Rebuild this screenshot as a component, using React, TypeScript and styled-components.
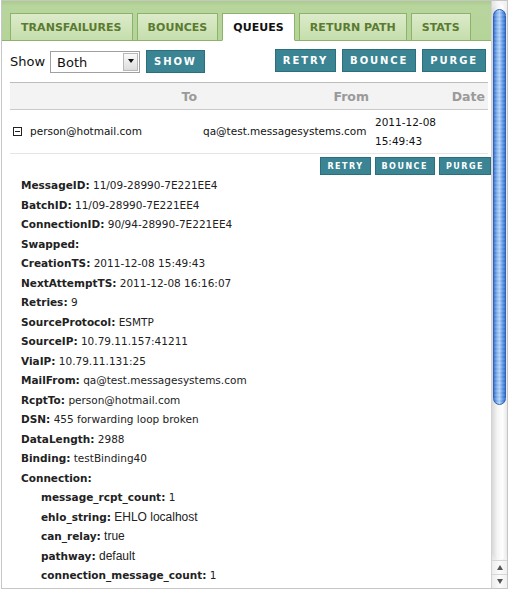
import React from 'react'
import styled, { createGlobalStyle } from 'styled-components'

const GlobalStyle = createGlobalStyle`
  html, body {
    margin: 0;
    padding: 0;
    background: #fff;
    font-family: "DejaVu Sans", Verdana, sans-serif;
    color: #222;
  }
`;

const Panel = styled.div`
  margin-left: 1px;
  width: 507px;
  height: 589px;
  box-sizing: border-box;
  border: 1px solid #c6c6c6;
  display: flex;
  background: #fff;
  overflow: hidden;
`;

const Main = styled.div`
  flex: 1;
  min-width: 0;
  overflow: hidden;
`;

// drawn aqua scrollbar
const ScrollBar = styled.div`
  width: 15px;
  display: flex;
  flex-direction: column;
  background: linear-gradient(to right, #e4e4e4, #f9f9f9 45%, #efefef);
  border-left: 1px solid #d2d2d2;
`;

const Track = styled.div`
  flex: 1;
  margin: 3px 0 0 0;
  padding-top: 5px;
  border-radius: 8px;
  background: linear-gradient(to right, #d8d8d8, #f4f4f4 35%, #fefefe 70%, #e8e8e8);
`;

const Thumb = styled.div`
  height: 396px;
  margin: 0 1px;
  box-sizing: border-box;
  border-radius: 7px;
  border: 1px solid #2f62b8;
  background:
    repeating-linear-gradient(to bottom, rgba(255,255,255,0.08) 0 2px, rgba(0,0,0,0.03) 2px 4px),
    linear-gradient(to right, #3a77d6, #8fbaf2 30%, #b1d2f9 50%, #6aa2ec 75%, #3670d0);
`;

const Arrow = styled.div<{ $down?: boolean }>`
  height: 13px;
  display: flex;
  align-items: center;
  justify-content: center;
  border-top: 1px solid #d6d6d6;
  background: linear-gradient(to right, #ececec, #fbfbfb 50%, #f0f0f0);

  &::before {
    content: '';
    border-left: 3px solid transparent;
    border-right: 3px solid transparent;
    ${p => (p.$down ? 'border-top: 5px solid #555;' : 'border-bottom: 5px solid #555;')}
  }
`;

const TabBar = styled.div`
  display: flex;
  align-items: flex-end;
  gap: 4px;
  height: 39px;
  padding-left: 8px;
  border-bottom: 1px solid #8db26a;
  background: linear-gradient(#a9cb8a, #b7d59c 12%, #b5d49a);
`;

const Tab = styled.div<{ $active?: boolean }>`
  height: 26px;
  margin-bottom: -1px;
  padding: 0 10px;
  display: flex;
  align-items: center;
  white-space: nowrap;
  font-size: 11px;
  letter-spacing: 0.05px;
  font-weight: bold;
  color: ${p => (p.$active ? '#111' : '#5a7b30')};
  background: ${p => (p.$active ? '#fff' : 'linear-gradient(#dcebca, #c5deac)')};
  border: 1px solid #8db26a;
  border-bottom-color: ${p => (p.$active ? '#fff' : '#8db26a')};
`;

const Toolbar = styled.div`
  display: flex;
  align-items: center;
  height: 41px;
  padding: 0 5px 0 8px;
`;

const ShowLabel = styled.span`
  font-size: 13px;
  color: #111;
  margin-right: 5px;
`;

const SelectBox = styled.span`
  position: relative;
  display: inline-block;
  width: 90px;
  height: 22px;
  box-sizing: border-box;
  border: 1px solid #a0a0a0;
  background: #fff;
  margin-right: 6px;

  &::after {
    content: '';
    position: absolute;
    right: 1px;
    top: 1px;
    width: 13px;
    height: 16px;
    border: 1px solid #b8b8b8;
    background: linear-gradient(#fafafa, #dcdcdc);
  }
  &::before {
    content: '';
    position: absolute;
    right: 5px;
    top: 7px;
    border-left: 3px solid transparent;
    border-right: 3px solid transparent;
    border-top: 4px solid #111;
    z-index: 1;
  }
`;

const Select = styled.select`
  appearance: none;
  border: none;
  outline: none;
  background: transparent;
  width: 100%;
  height: 100%;
  padding: 0 0 0 6px;
  font-family: "DejaVu Sans", Verdana, sans-serif;
  font-size: 13px;
  color: #111;
`;

const Button = styled.button<{ $small?: boolean }>`
  box-sizing: border-box;
  height: ${p => (p.$small ? '18px' : '23px')};
  padding: ${p => (p.$small ? '0 6px' : '0 7px')};
  background: #3a8493;
  border: 1px solid #2b6f7d;
  color: #fff;
  font-family: "DejaVu Sans", Verdana, sans-serif;
  font-weight: bold;
  font-size: ${p => (p.$small ? '8px' : '10px')};
  letter-spacing: ${p => (p.$small ? '1.5px' : '1.9px')};
  cursor: pointer;
`;

const RightGroup = styled.div`
  margin-left: auto;
  display: flex;
  gap: 6px;
  margin-top: -3px;
`;

const Table = styled.div`
  margin: 0 3px 0 8px;
  border-top: 1px solid #bcbcbc;
`;

const Row = styled.div<{ $head?: boolean }>`
  display: grid;
  grid-template-columns: 190px 172px 1fr;
  align-items: center;
  height: ${p => (p.$head ? '26px' : '43px')};
  background: ${p => (p.$head ? '#f3f3f3' : '#fff')};
  border-bottom: 1px solid ${p => (p.$head ? '#c9c9c9' : '#e6e6e6')};
`;

const HeadCell = styled.div`
  text-align: right;
  padding: 0 3px;
  font-size: 12.5px;
  font-weight: bold;
  color: #9a9a9a;
`;

const Cell = styled.div`
  display: flex;
  align-items: center;
  padding: 0 3px;
  font-size: 10.5px;
  color: #111;
  line-height: 19px;
  white-space: nowrap;
`;

const Toggle = styled.span`
  position: relative;
  width: 9px;
  height: 9px;
  box-sizing: border-box;
  border: 1px solid #222;
  margin: 0 8px 0 0;

  &::after {
    content: '';
    position: absolute;
    left: 1px;
    right: 1px;
    top: 3px;
    height: 1px;
    background: #222;
  }
`;

const DateStack = styled.div`
  display: flex;
  flex-direction: column;
  padding-top: 1px;
`;

const ActionRow = styled.div`
  display: flex;
  justify-content: flex-end;
  gap: 4px;
  padding: 3px 0 0 0;
`;

const Details = styled.div<{ $nested?: boolean }>`
  padding-left: ${p => (p.$nested ? '20px' : '19px')};
  padding-top: ${p => (p.$nested ? '0' : '1px')};
  font-size: 10.5px;
  line-height: 19.5px;
  white-space: nowrap;
`;

const Label = styled.span`
  font-weight: bold;
  color: #222;
`;

const Value = styled.span<{ $alt?: boolean }>`
  color: #222;
  font-family: ${p => (p.$alt ? '"Liberation Sans", Arial, sans-serif' : 'inherit')};
  font-size: ${p => (p.$alt ? '12px' : 'inherit')};
`;

const fields: [string, string][] = [
  ['MessageID', '11/09-28990-7E221EE4'],
  ['BatchID', '11/09-28990-7E221EE4'],
  ['ConnectionID', '90/94-28990-7E221EE4'],
  ['Swapped', ''],
  ['CreationTS', '2011-12-08 15:49:43'],
  ['NextAttemptTS', '2011-12-08 16:16:07'],
  ['Retries', '9'],
  ['SourceProtocol', 'ESMTP'],
  ['SourceIP', '10.79.11.157:41211'],
  ['ViaIP', '10.79.11.131:25'],
  ['MailFrom', 'qa@test.messagesystems.com'],
  ['RcptTo', 'person@hotmail.com'],
  ['DSN', '455 forwarding loop broken'],
  ['DataLength', '2988'],
  ['Binding', 'testBinding40'],
];

const connection: [string, string, boolean][] = [
  ['message_rcpt_count', '1', false],
  ['ehlo_string', 'EHLO localhost', true],
  ['can_relay', 'true', true],
  ['pathway', 'default', true],
  ['connection_message_count', '1', false],
];

const tabs = ['TRANSFAILURES', 'BOUNCES', 'QUEUES', 'RETURN PATH', 'STATS'];

export default function App() {
  return (
    <>
      <GlobalStyle />
      <Panel>
        <Main>
          <TabBar>
            {tabs.map(t => (
              <Tab key={t} $active={t === 'QUEUES'}>{t}</Tab>
            ))}
          </TabBar>

          <Toolbar>
            <ShowLabel>Show</ShowLabel>
            <SelectBox>
              <Select defaultValue="Both">
                <option>Both</option>
                <option>Active</option>
                <option>Delayed</option>
              </Select>
            </SelectBox>
            <Button>SHOW</Button>
            <RightGroup>
              <Button>RETRY</Button>
              <Button>BOUNCE</Button>
              <Button>PURGE</Button>
            </RightGroup>
          </Toolbar>

          <Table>
            <Row $head>
              <HeadCell>To</HeadCell>
              <HeadCell>From</HeadCell>
              <HeadCell>Date</HeadCell>
            </Row>
            <Row>
              <Cell>
                <Toggle />
                person@hotmail.com
              </Cell>
              <Cell>qa@test.messagesystems.com</Cell>
              <Cell>
                <DateStack>
                  <span>2011-12-08</span>
                  <span>15:49:43</span>
                </DateStack>
              </Cell>
            </Row>
          </Table>

          <ActionRow>
            <Button $small>RETRY</Button>
            <Button $small>BOUNCE</Button>
            <Button $small>PURGE</Button>
          </ActionRow>

          <Details>
            {fields.map(([k, v]) => (
              <div key={k}>
                <Label>{k}:</Label> <Value>{v}</Value>
              </div>
            ))}
            <div>
              <Label>Connection:</Label>
            </div>
            <Details $nested>
              {connection.map(([k, v, alt]) => (
                <div key={k}>
                  <Label>{k}:</Label> <Value $alt={alt}>{v}</Value>
                </div>
              ))}
            </Details>
          </Details>
        </Main>
        <ScrollBar>
          <Track>
            <Thumb />
          </Track>
          <Arrow />
          <Arrow $down />
        </ScrollBar>
      </Panel>
    </>
  );
}
